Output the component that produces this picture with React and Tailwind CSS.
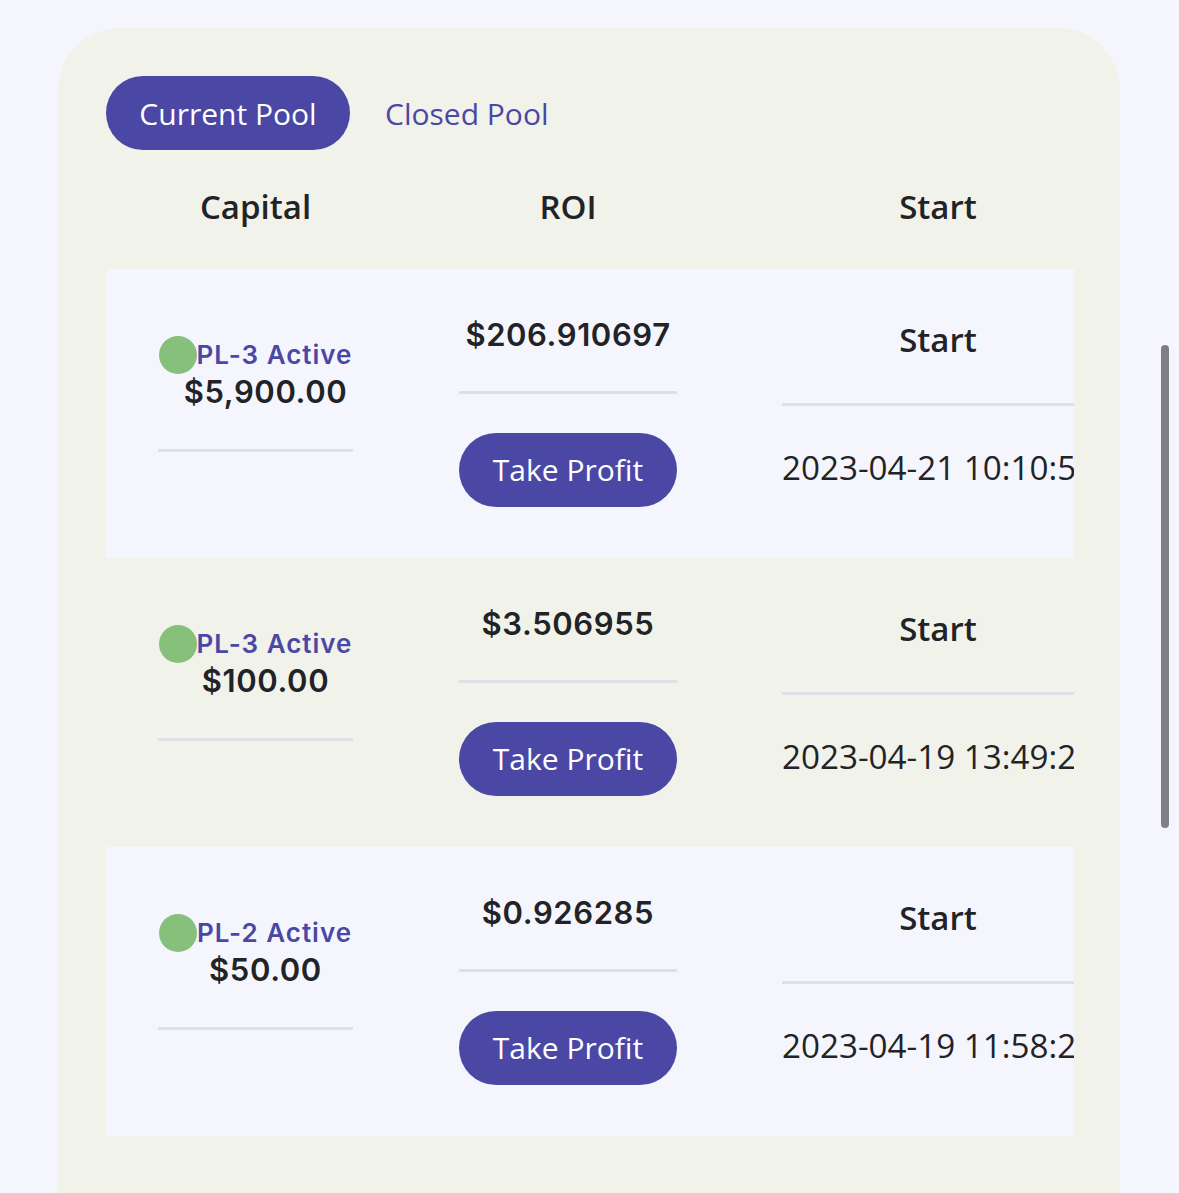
import React, { useState } from 'react';

const pools = [
  { plan: 'PL-3', capital: '$5,900.00', roi: '$206.910697', start: '2023-04-21 10:10:51' },
  { plan: 'PL-3', capital: '$100.00', roi: '$3.506955', start: '2023-04-19 13:49:22' },
  { plan: 'PL-2', capital: '$50.00', roi: '$0.926285', start: '2023-04-19 11:58:26' },
];

const sans = "font-['Open_Sans','Noto_Sans',sans-serif]";
const geo = "font-['Inter','Lato',sans-serif]";

function PoolRow({ pool, shaded }) {
  return (
    <div className={`flex h-[289px] pl-[52px] ${shaded ? 'bg-[#f5f6fd]' : ''}`}>
      {/* capital */}
      <div className="w-[195px] shrink-0 flex flex-col pt-[70px]">
        <div className="flex items-center justify-center h-[32px]">
          <span className="w-[38px] h-[38px] rounded-full bg-[#86c07a] shrink-0" />
          <span className={`${geo} text-[26px] font-semibold tracking-[1px] text-[#4b48a5] leading-[32px] whitespace-nowrap`}>{pool.plan} Active</span>
        </div>
        <div className={`${geo} text-[31px] font-semibold tracking-[0.6px] text-[#222327] leading-[36px] mt-[3px] text-center pl-[20px]`}>{pool.capital}</div>
        <div className="h-[3px] bg-[#dfe0e8] mt-[39px]" />
      </div>

      {/* roi */}
      <div className="w-[218px] shrink-0 ml-[106px] flex flex-col pt-[48px]">
        <div className={`${geo} text-[31px] font-semibold tracking-[0.6px] text-[#222327] leading-[36px] text-center whitespace-nowrap`}>{pool.roi}</div>
        <div className="h-[3px] bg-[#dfe0e6] mt-[38px]" />
        <button className={`${sans} mt-[39px] h-[74px] rounded-full bg-[#4b48a5] text-white text-[30px] leading-none`}>Take Profit</button>
      </div>

      {/* start */}
      <div className="w-[312px] shrink-0 ml-[105px] flex flex-col pt-[51px]">
        <div className={`${sans} text-[33px] font-semibold text-[#222327] leading-[40px] text-center`}>Start</div>
        <div className="h-[3px] bg-[#dfe0e6] mt-[43px]" />
        <div className={`${sans} text-[33.2px] font-medium text-[#222327] leading-[40px] mt-[42px] whitespace-nowrap`}>{pool.start}</div>
      </div>
    </div>
  );
}

export default function App() {
  const [tab, setTab] = useState('current');

  return (
    <div className="min-h-screen bg-[#f5f6fd] pt-[28px] px-[58px] relative overflow-hidden">
      <div className="w-[1062px] bg-[#f1f2ea] rounded-t-[62px] pt-[48px] pl-[48px] pb-[100px]">
        <div className="flex items-center gap-[35px]">
          <button
            onClick={() => setTab('current')}
            className={`${sans} h-[74px] w-[244px] rounded-full text-[30px] ${tab === 'current' ? 'bg-[#4b48a5] text-white' : 'text-[#4b48a5]'}`}
          >
            Current Pool
          </button>
          <button
            onClick={() => setTab('closed')}
            className={`${sans} h-[74px] text-[30px] ${tab === 'closed' ? 'bg-[#4b48a5] text-white px-8 rounded-full' : 'text-[#4b48a5]'}`}
          >
            Closed Pool
          </button>
        </div>

        <div className={`${sans} flex h-[116px] items-center pl-[52px] text-[33px] font-semibold text-[#222327] pb-[2px]`}>
          <div className="w-[195px] text-center">Capital</div>
          <div className="w-[218px] ml-[106px] text-center">ROI</div>
          <div className="w-[312px] ml-[105px] text-center">Start</div>
        </div>

        <div className="w-[968px] overflow-hidden mt-[3px]">
          {pools.map((p, i) => (
            <PoolRow key={i} pool={p} shaded={i % 2 === 0} />
          ))}
        </div>
      </div>

      {/* scrollbar */}
      <div className="absolute left-[1161px] top-[345px] w-[8px] h-[483px] rounded-full bg-[#7e7e83]" />
    </div>
  );
}
